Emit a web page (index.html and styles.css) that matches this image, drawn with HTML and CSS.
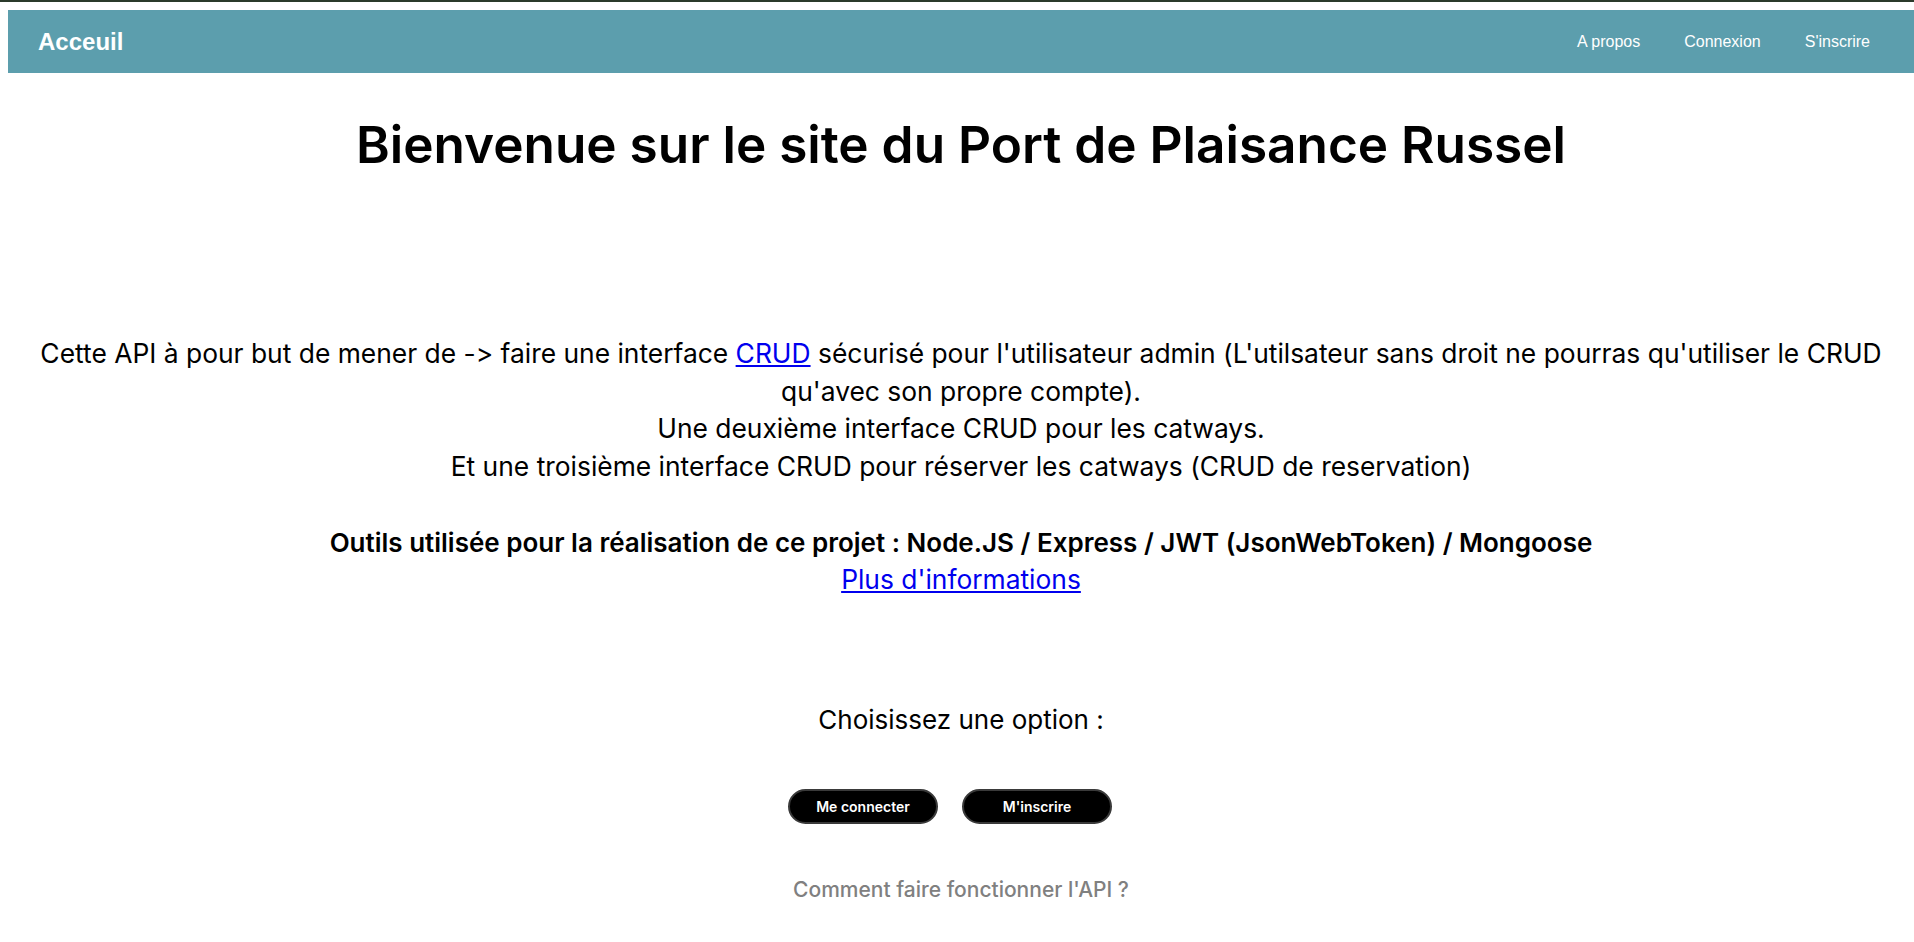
FILE: index.html
```html
<!DOCTYPE html>
<html lang="fr">
<head>
<meta charset="utf-8">
<title>Port de Plaisance Russel</title>
<link rel="stylesheet" href="styles.css">
</head>
<body>
<nav class="navbar">
  <a class="brand" href="#">Acceuil</a>
  <div class="nav-links">
    <a class="nav-link" href="#">A propos</a>
    <a class="nav-link" href="#">Connexion</a>
    <a class="nav-link" href="#">S'inscrire</a>
  </div>
</nav>
<main class="content">
  <h1 class="title">Bienvenue sur le site du Port de Plaisance Russel</h1>
  <p class="intro">Cette API à pour but de mener de -&gt; faire une interface <a class="link" href="#">CRUD</a> sécurisé pour l'utilisateur admin (L'utilsateur sans droit ne pourras qu'utiliser le CRUD qu'avec son propre compte).<br>Une deuxième interface CRUD pour les catways.<br>Et une troisième interface CRUD pour réserver les catways (CRUD de reservation)<br><br><strong class="tools">Outils utilisée pour la réalisation de ce projet : Node.JS / Express / JWT (JsonWebToken) / Mongoose</strong><br><a class="link" href="#">Plus d'informations</a></p>
  <p class="choose">Choisissez une option :</p>
  <div class="actions">
    <button class="btn" type="button">Me connecter</button>
    <button class="btn" type="button">M'inscrire</button>
  </div>
  <p class="howto">Comment faire fonctionner l'API ?</p>
</main>
</body>
</html>
```
FILE: styles.css
```css
html {
  border-top: 2px solid #2b3a2b;
  background: #ffffff;
}

body {
  margin: 8px 0 8px 8px;
  font-family: Inter, "Noto Sans", sans-serif;
  font-feature-settings: "calt" 0;
  font-variant-ligatures: none;
  color: #000000;
}

.navbar {
  display: flex;
  justify-content: space-between;
  align-items: center;
  height: 63px;
  padding: 0 0 0 30px;
  background: #5c9ead;
}

.brand {
  font-family: "Liberation Sans", Arial, sans-serif;
  font-weight: 700;
  font-size: 24px;
  color: #ffffff;
  text-decoration: none;
}

.nav-links {
  display: flex;
  padding-right: 22px;
}

.nav-link {
  font-family: "Liberation Sans", Arial, sans-serif;
  font-size: 16px;
  color: #ffffff;
  text-decoration: none;
  padding: 0 22px;
}

.content {
  text-align: center;
}

.title {
  margin: 41px 0 0;
  font-size: 51.3px;
  font-weight: 600;
  line-height: 61px;
}

.intro {
  margin: 160px 0 0;
  font-size: 26.4px;
  line-height: 37.7px;
}

.tools {
  font-size: 26px;
  font-weight: 600;
}

.link {
  color: #0000ee;
  text-decoration: underline;
}

.choose {
  margin: 101px 0 0;
  font-size: 26px;
  line-height: 1.5;
}

.actions {
  display: flex;
  justify-content: center;
  gap: 24px;
  margin-top: 50px;
  padding-right: 22px;
}

.btn {
  width: 150px;
  height: 35px;
  border-radius: 18px;
  border: 2px solid #3a3a3a;
  background: #000000;
  color: #ffffff;
  font-family: Inter, "Noto Sans", sans-serif;
  font-feature-settings: "calt" 0;
  font-weight: 600;
  font-size: 14px;
  padding: 0;
}

.howto {
  margin: 50px 0 0;
  font-size: 21px;
  font-weight: 500;
  line-height: 1.5;
  color: #808080;
}
```
